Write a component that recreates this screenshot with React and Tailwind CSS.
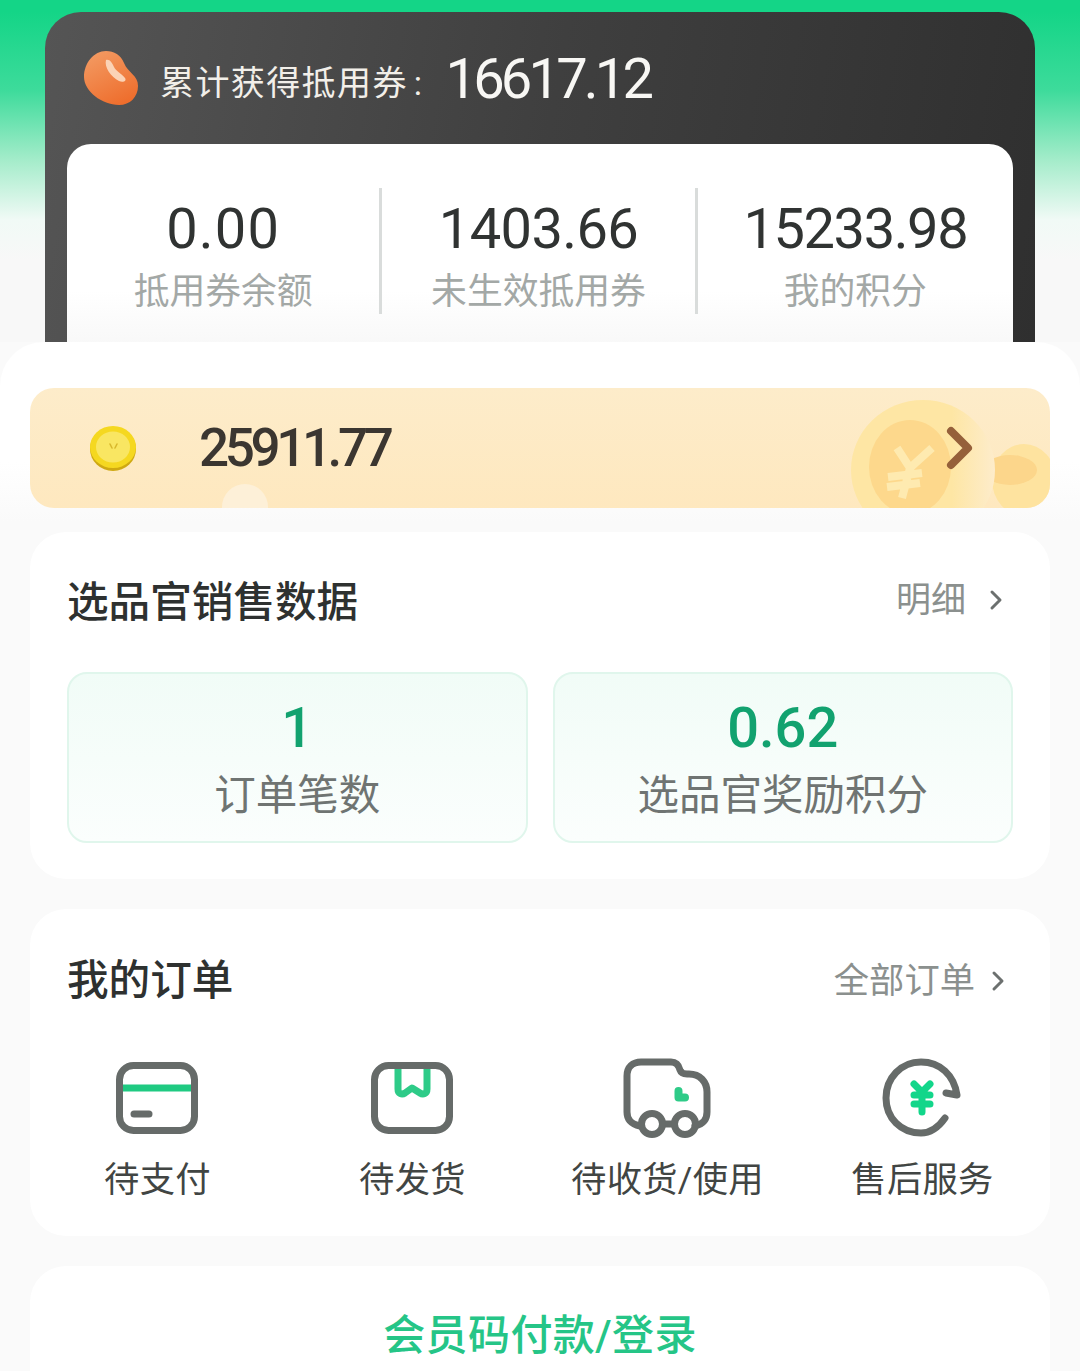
import React from "react";

const sans = "font-['Roboto','Noto_Sans_CJK_SC',sans-serif]";

const stats = [
  { value: "0.00", label: "抵用券余额", tracking: "tracking-[1.2px]" },
  { value: "1403.66", label: "未生效抵用券", tracking: "tracking-[-0.6px]" },
  { value: "15233.98", label: "我的积分", tracking: "tracking-[-1.4px]" },
];

const BeanIcon = () => (
  <svg width="54" height="54" viewBox="0 0 54 54" className="shrink-0">
    <defs>
      <linearGradient id="bean" x1="0.2" y1="0" x2="0.7" y2="1">
        <stop offset="0" stopColor="#f39a62" />
        <stop offset="1" stopColor="#ee6d2c" />
      </linearGradient>
    </defs>
    <path d="M22 0C10 0 0 12 0 26C0 40 18 54 35 54C46 54 54 46 54 35C54 24 44 22 40 12C37 4 30 0 22 0Z" fill="url(#bean)" />
    <path d="M22 9C26 8 28 12 30 16C32 20 37 22 41 27C43 30 39 32 35 30C27 26 20 16 22 9Z" fill="#fbd3b6" />
  </svg>
);

const CoinIcon = () => (
  <svg width="48" height="46" viewBox="0 0 48 46">
    <ellipse cx="24" cy="24" rx="23" ry="22" fill="#cfa912" />
    <ellipse cx="24" cy="22" rx="23" ry="21" fill="#f5d820" />
    <ellipse cx="24" cy="22" rx="17" ry="15.5" fill="#f9e662" />
    <path d="M21 19l2 4M28 19l-2 4" stroke="#d9b92e" strokeWidth="1.6" strokeLinecap="round" />
  </svg>
);

const CardIcon = () => (
  <svg width="84" height="74" viewBox="0 0 84 74" fill="none" className="mr-[2px]">
    <path d="M7 27h70" stroke="#1fca82" strokeWidth="7" />
    <rect x="4.5" y="4.5" width="75" height="65" rx="14" stroke="#666b69" strokeWidth="7" />
    <path d="M19 53h15" stroke="#666b69" strokeWidth="7" strokeLinecap="round" />
  </svg>
);

const BoxIcon = () => (
  <svg width="84" height="74" viewBox="0 0 84 74" fill="none" className="mr-[2px]">
    <path d="M28 6V28C28 33 32 34 35 32L42 27L50 32C53 34 57 33 57 28V6" stroke="#2ecb88" strokeWidth="7" strokeLinejoin="round" />
    <rect x="4.5" y="4.5" width="75" height="65" rx="14" stroke="#666b69" strokeWidth="7" />
  </svg>
);

const TruckIcon = () => (
  <svg width="90" height="80" viewBox="0 0 90 80" fill="none">
    <path d="M17 68C8 66 4 62 4 54V18C4 9 10 4 18 4H48C54 4 56 8 57 12C58 15 60 16 64 16H66C77 16 84 24 84 34V54C84 62 80 66 72 68" stroke="#666b69" strokeWidth="7" strokeLinecap="round" />
    <path d="M38 66H52" stroke="#666b69" strokeWidth="7" />
    <circle cx="29" cy="66" r="10.5" stroke="#666b69" strokeWidth="7" />
    <circle cx="62" cy="66" r="10.5" stroke="#666b69" strokeWidth="7" />
    <path d="M55.5 33V39.5H62" stroke="#2ecb88" strokeWidth="8" strokeLinecap="round" strokeLinejoin="round" />
  </svg>
);

const RefundIcon = () => (
  <svg width="82" height="80" viewBox="0 0 82 80" fill="none">
    <path d="M63 60C56 70 48 75 39 75C19 75 4 60 4 40C4 20 19 4 39 4C58 4 72 17 75 37L64 35" stroke="#666b69" strokeWidth="7" strokeLinecap="round" strokeLinejoin="round" />
    <path d="M32 26L40 34L48 26M32 37H48M32 46H48M40 34V54" stroke="#12d68a" strokeWidth="7" strokeLinecap="round" strokeLinejoin="round" />
  </svg>
);

const Chevron = ({ className }) => (
  <svg width="14" height="22" viewBox="0 0 14 22" fill="none" className={className}>
    <path d="M3 3L11 11L3 19" stroke="#6c706f" strokeWidth="3" strokeLinecap="round" strokeLinejoin="round" />
  </svg>
);

const orders = [
  { label: "待支付", icon: <CardIcon /> },
  { label: "待发货", icon: <BoxIcon /> },
  { label: "待收货/使用", icon: <TruckIcon /> },
  { label: "售后服务", icon: <RefundIcon /> },
];

export default function App() {
  return (
    <div className={`${sans} w-[1080px] h-[1371px] overflow-hidden bg-[#fafafa]`}>
      {/* Cabecera verde con la tarjeta oscura */}
      <div className="h-[342px] px-[45px] pt-3 overflow-hidden bg-[linear-gradient(180deg,#14d587_0%,#14d587_12px,#3ddb9b_90px,#a4ecca_160px,#f1faf6_220px,#f8f8f8_260px)]">
        <div className="h-[340px] rounded-t-[36px] px-[22px] bg-[linear-gradient(100deg,#555555,#3f3f3f_50%,#2f2f2f)]">
          <div className="h-[132px] flex items-center pl-[17px]">
            <BeanIcon />
            <span className="ml-[22px] mt-[10px] text-[34px] tracking-[1.4px] text-[#f2efe9]">
              累计获得抵用券<span className="ml-[6px]">:</span>
            </span>
            <span className="ml-[22px] mt-[2px] text-[56px] tracking-[-3.8px] text-[#f8f7f4]">16617.12</span>
          </div>
          <div className="h-[210px] rounded-t-[24px] bg-[linear-gradient(180deg,#ffffff_70%,#f7f7f7)] pt-[44px] flex">
            {stats.map((s, i) => (
              <div
                key={s.label}
                className={`w-[316px] h-[126px] flex flex-col items-center ${i < 2 ? "border-r-[3px] border-[#d9dcdb]" : ""}`}
              >
                <div className={`h-[82px] leading-[82px] text-[56px] text-[#303332] ${s.tracking}`}>{s.value}</div>
                <div className="text-[35.8px] leading-[44px] text-[#a3a8a6]">{s.label}</div>
              </div>
            ))}
          </div>
        </div>
      </div>

      {/* Hoja blanca */}
      <div className="relative h-[1029px] rounded-t-[44px] px-[30px] pt-[46px] bg-[linear-gradient(180deg,#ffffff_0px,#ffffff_120px,#fafafa_180px)]">
        <div className="relative h-[120px] rounded-[24px] overflow-hidden flex items-center pl-[59px] bg-[linear-gradient(180deg,#fdecca,#fee8bf)]">
          <CoinIcon />
          <span className="ml-[62px] mt-[2px] text-[53px] font-medium tracking-[-4.4px] text-[#3b3631]">25911.77</span>
          {/* Monedas decorativas */}
          <div className="absolute left-[192px] bottom-[-22px] w-[46px] h-[46px] rounded-full bg-[#fdf0d8]" />
          <svg width="200" height="120" viewBox="0 0 200 120" className="absolute right-0 top-0">
            <defs>
              <linearGradient id="outer" x1="0" y1="0" x2="1" y2="0">
                <stop offset="0" stopColor="#fee6a4" />
                <stop offset="0.7" stopColor="#fee6a4" />
                <stop offset="1" stopColor="#fdeccb" />
              </linearGradient>
            </defs>
            <ellipse cx="174" cy="92" rx="32" ry="36" fill="#fee39f" />
            <ellipse cx="160" cy="82" rx="27" ry="15" fill="#fcd68b" />
            <ellipse cx="73" cy="82" rx="72" ry="70" fill="url(#outer)" />
            <ellipse cx="60" cy="79" rx="41" ry="47" fill="#fdd88c" />
            <path d="M47 60L60 80L82 60M38 89L72 85M37 99L70 95M60 80L52 110" stroke="#feeab0" strokeWidth="8" fill="none" />
          </svg>
          <svg width="28" height="44" viewBox="0 0 28 44" fill="none" className="absolute right-[76px] top-[38px]">
            <path d="M5 5L22 22L5 39" stroke="#95603a" strokeWidth="8" strokeLinecap="round" strokeLinejoin="round" />
          </svg>
        </div>

        <div className="mt-6 h-[347px] rounded-[36px] bg-white px-[37px]">
          <div className="h-[140px] flex items-center justify-between">
            <span className="mt-[2px] text-[41.6px] font-medium text-[#2e3130]">选品官销售数据</span>
            <span className="flex items-center gap-[23px] pr-[10px] text-[35px] text-[#8b908e]">
              <span className="mt-[-2px]">明细</span>
              <Chevron className="mt-[-4px]" />
            </span>
          </div>
          <div className="grid grid-cols-2 gap-[25px]">
            {[
              { value: "1", label: "订单笔数" },
              { value: "0.62", label: "选品官奖励积分" },
            ].map((c) => (
              <div
                key={c.label}
                className="h-[171px] rounded-[20px] border-2 border-[#e0f6ec] bg-[linear-gradient(180deg,#f1fcf7,#fbfefd)] flex flex-col items-center pt-[21px]"
              >
                <div className="h-[66px] leading-[66px] text-[56px] font-medium text-[#12a26f]">{c.value}</div>
                <div className="mt-[5px] text-[41.5px] leading-[60px] text-[#6f7472]">{c.label}</div>
              </div>
            ))}
          </div>
        </div>

        <div className="mt-[30px] h-[327px] rounded-[36px] bg-white">
          <div className="h-[138px] px-[37px] flex items-center justify-between">
            <span className="mt-[6px] text-[41.6px] font-medium text-[#2e3130]">我的订单</span>
            <span className="mt-[6px] flex items-center gap-[16px] pr-[8px] text-[35.3px] text-[#8b908e]">
              全部订单
              <Chevron />
            </span>
          </div>
          <div className="grid grid-cols-4 pt-[11px]">
            {orders.map((o) => (
              <div key={o.label} className="flex flex-col items-center">
                <div className="h-[80px] flex items-center justify-center">{o.icon}</div>
                <div className="mt-[20px] text-[35.3px] leading-[44px] tracking-[0.3px] text-[#414543]">{o.label}</div>
              </div>
            ))}
          </div>
        </div>

        <div className="mt-[30px] h-[140px] rounded-t-[36px] bg-white pt-[41px] text-center text-[42px] tracking-[0.4px] leading-[58px] font-medium text-[#25c587]">
          会员码付款/登录
        </div>
      </div>
    </div>
  );
}
